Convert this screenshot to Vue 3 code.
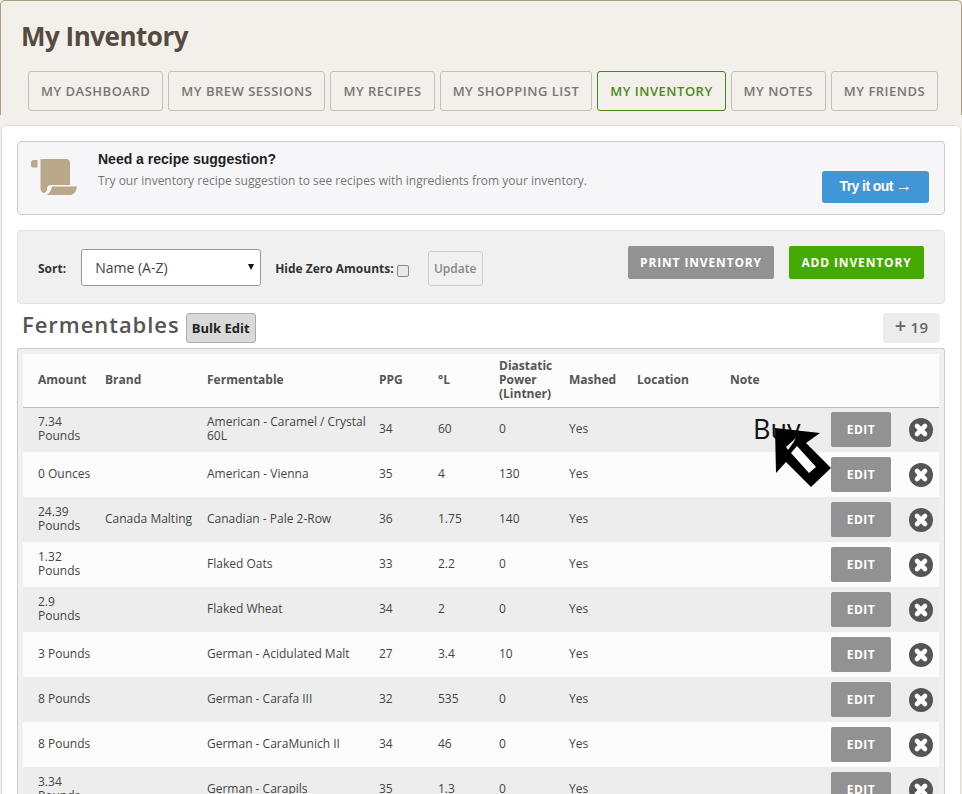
<script setup>
const tabs = ['MY DASHBOARD', 'MY BREW SESSIONS', 'MY RECIPES', 'MY SHOPPING LIST', 'MY INVENTORY', 'MY NOTES', 'MY FRIENDS']
const rows = [
  ['7.34\nPounds', '', 'American - Caramel / Crystal\n60L', '34', '60', '0'],
  ['0 Ounces', '', 'American - Vienna', '35', '4', '130'],
  ['24.39\nPounds', 'Canada Malting', 'Canadian - Pale 2-Row', '36', '1.75', '140'],
  ['1.32\nPounds', '', 'Flaked Oats', '33', '2.2', '0'],
  ['2.9\nPounds', '', 'Flaked Wheat', '34', '2', '0'],
  ['3 Pounds', '', 'German - Acidulated Malt', '27', '3.4', '10'],
  ['8 Pounds', '', 'German - Carafa III', '32', '535', '0'],
  ['8 Pounds', '', 'German - CaraMunich II', '34', '46', '0'],
  ['3.34\nPounds', '', 'German - Carapils', '35', '1.3', '0']
]
</script>

<template>
  <div class="page">
    <header class="head">
      <h1>My Inventory</h1>
      <nav class="tabs">
        <a v-for="t in tabs" :key="t" class="tab" :class="{ active: t === 'MY INVENTORY' }">{{ t }}</a>
      </nav>
    </header>
    <main class="panel">
      <section class="promo">
        <svg class="scroll" width="47" height="37" viewBox="0 0 47 37">
          <path fill="#b9a88a" d="M0 3.5 Q0 1 3 1 L6.5 1 L6.5 8.5 L2 8.5 Q0 8.5 0 6.5 Z" />
          <path fill="#b9a88a" d="M9.5 0 L35 0 Q39 0 39 4 L39 26 L20 26 Q16 26 16 30 L16 31 Q15 34 13 34 Q9.5 33 9.5 29 Z" />
          <path fill="#b9a88a" d="M21 27.5 L46 27.5 Q45 35 40 36 L16 36 Q20 33 21 27.5 Z" />
        </svg>
        <div class="promo-text">
          <strong>Need a recipe suggestion?</strong>
          <p>Try our inventory recipe suggestion to see recipes with ingredients from your inventory.</p>
        </div>
        <a class="try">Try it out <span class="arr">→</span></a>
      </section>

      <section class="filters">
        <label class="lbl sort">Sort:</label>
        <div class="select">Name (A-Z)<span class="caret"></span></div>
        <label class="lbl zero">Hide Zero Amounts:</label>
        <span class="check"></span>
        <span class="update">Update</span>
        <a class="btn grey">PRINT INVENTORY</a>
        <a class="btn green">ADD INVENTORY</a>
      </section>

      <div class="title-row">
        <h2>Fermentables</h2>
        <span class="bulk">Bulk Edit</span>
        <span class="count"><span class="plus">+</span> 19</span>
      </div>

      <div class="frame">
        <table>
          <colgroup>
            <col style="width:67px" /><col style="width:102px" /><col style="width:172px" /><col style="width:59px" />
            <col style="width:61px" /><col style="width:70px" /><col style="width:68px" /><col style="width:93px" />
            <col style="width:116px" /><col style="width:70px" /><col />
          </colgroup>
          <thead>
            <tr>
              <th>Amount</th><th>Brand</th><th>Fermentable</th><th>PPG</th><th>°L</th>
              <th>Diastatic Power (Lintner)</th><th>Mashed</th><th>Location</th><th>Note</th><th></th><th></th>
            </tr>
          </thead>
          <tbody>
            <tr v-for="(r, i) in rows" :key="i">
              <td v-for="(c, j) in r" :key="j">{{ c }}</td>
              <td>Yes</td><td></td><td></td>
              <td class="edit-cell"><a class="edit">EDIT</a></td>
              <td class="del-cell">
                <svg class="del" width="24" height="24" viewBox="0 0 24 24">
                  <circle cx="12" cy="12" r="12" fill="#555" />
                  <path d="M8 8 L16 16 M16 8 L8 16" stroke="#fff" stroke-width="4.6" stroke-linecap="round" />
                </svg>
              </td>
            </tr>
          </tbody>
        </table>
      </div>
    </main>

    <span class="buy">Buy</span>
    <svg class="arrow" width="60" height="62" viewBox="0 0 60 62">
      <polygon points="2,2 47,7 33,17 58,42 38,61 13,36 3,47" fill="#000" />
      <polygon points="18,27 24,20 43,41 36,47" fill="#fff" />
      <polygon points="13,21 23,12 20,17 15,24" fill="#ededed" />
    </svg>
  </div>
</template>

<style>
html, body { margin: 0; background: #fff; }
</style>

<style scoped>
.page {
  position: relative;
  width: 962px;
  height: 794px;
  overflow: hidden;
  background: #f3f0eb;
  font-family: "Open Sans", "Liberation Sans", sans-serif;
  color: #333;
}
.head {
  height: 115px;
  box-sizing: border-box;
  border: 1px solid #ad9c80;
  border-bottom: 0;
  border-radius: 5px 5px 0 0;
  padding: 0 0 0 20px;
  background: #f3f0eb;
}
h1 {
  margin: 0;
  padding-top: 18px;
  font-size: 26px;
  line-height: 34px;
  font-weight: 700;
  letter-spacing: -0.5px;
  color: #544b41;
}
.tabs {
  display: flex;
  gap: 5px;
  margin: 18px 0 0 7px;
}
.tab {
  box-sizing: border-box;
  height: 40px;
  padding: 0 12px;
  display: flex;
  align-items: center;
  border: 1px solid #c4c0ba;
  border-radius: 3px;
  font-size: 13px;
  font-weight: 600;
  letter-spacing: 0.5px;
  color: #777;
}
.tab.active {
  border-color: #3f8a12;
  color: #4a8a22;
}
.panel {
  box-sizing: border-box;
  height: 680px;
  margin: 10px 1px 0 1px;
  padding: 15px 15px 0 15px;
  background: #fff;
  border: 1px solid #e0dcd6;
  border-radius: 5px 5px 0 0;
}
.promo {
  box-sizing: border-box;
  height: 74px;
  display: flex;
  align-items: center;
  background: #f6f6f9;
  border: 1px solid #ccc;
  border-radius: 4px;
  padding: 0 15px 0 13px;
}
.scroll { flex: none; margin: 0 20px 2px 0; }
.promo-text { flex: 1; align-self: flex-start; padding-top: 8px; }
.promo-text strong {
  display: block;
  font-family: "Liberation Sans", Arial, sans-serif;
  font-size: 14px;
  line-height: 18px;
  color: #222;
}
.promo-text p {
  margin: 4px 0 0;
  font-size: 12px;
  line-height: 17px;
  color: #777;
}
.try {
  box-sizing: border-box;
  width: 107px;
  height: 32px;
  margin-top: 18px;
  padding-bottom: 2px;
  display: flex;
  align-items: center;
  justify-content: center;
  background: #4196d8;
  border-radius: 3px;
  font-family: "Liberation Sans", Arial, sans-serif;
  font-size: 14px;
  font-weight: 700;
  letter-spacing: -0.6px;
  white-space: pre;
  color: #fff;
}
.arr { font-size: 16px; font-weight: 400; line-height: 16px; }
.filters {
  box-sizing: border-box;
  height: 74px;
  margin-top: 15px;
  position: relative;
  display: flex;
  align-items: flex-start;
  background: #f0f0f0;
  border: 1px solid #e2e2e2;
  border-radius: 4px;
  padding: 0 20px 0 20px;
}
.lbl {
  font-size: 12px;
  font-weight: 700;
  color: #333;
  line-height: 16px;
  margin-top: 30px;
}
.select {
  box-sizing: border-box;
  position: relative;
  width: 180px;
  height: 37px;
  margin: 18px 14px 0 15px;
  padding-left: 13px;
  line-height: 35px;
  font-size: 14px;
  background: #fff;
  border: 1px solid #999;
  border-radius: 3px;
  color: #444;
}
.caret {
  position: absolute;
  right: 6px;
  top: 14px;
  border-left: 3px solid transparent;
  border-right: 3px solid transparent;
  border-top: 6px solid #111;
}
.check {
  box-sizing: border-box;
  width: 12px;
  height: 12px;
  margin: 34px 0 0 3px;
  background: #e8e8e8;
  border: 1px solid #888;
  border-radius: 2px;
}
.update {
  box-sizing: border-box;
  width: 55px;
  height: 35px;
  margin: 20px 0 0 19px;
  text-align: center;
  line-height: 33px;
  font-size: 12px;
  font-weight: 600;
  color: #888;
  border: 1px solid #ccc;
  border-radius: 3px;
}
.btn {
  box-sizing: border-box;
  height: 33px;
  margin-top: 15px;
  display: flex;
  align-items: center;
  justify-content: center;
  font-size: 12px;
  font-weight: 700;
  letter-spacing: 0.85px;
  color: #fff;
  border-radius: 2px;
}
.btn.grey { width: 146px; margin-left: auto; background: #929292; }
.btn.green { width: 135px; margin-left: 15px; background: #44aa00; }
.title-row {
  height: 44px;
  display: flex;
  align-items: center;
  padding: 0 5px 0 5px;
}
h2 {
  margin: 0 0 4px;
  font-size: 22px;
  font-weight: 600;
  letter-spacing: 0.95px;
  color: #555;
  line-height: 30px;
}
.bulk {
  box-sizing: border-box;
  width: 70px;
  height: 30px;
  margin: 3px 0 0 6px;
  text-align: center;
  line-height: 28px;
  font-size: 13px;
  font-weight: 700;
  color: #222;
  background: #d9d9d9;
  border: 1px solid #aaa;
  border-radius: 3px;
}
.count {
  box-sizing: border-box;
  width: 57px;
  height: 30px;
  margin: 3px 0 0 auto;
  text-align: center;
  line-height: 29px;
  font-size: 15px;
  font-weight: 600;
  letter-spacing: 0.3px;
  color: #666;
  background: #ececec;
  border-radius: 4px;
}
.plus { font-size: 20px; line-height: 20px; }
.frame {
  box-sizing: border-box;
  background: #f0f0f0;
  border: 1px solid #ccc;
  border-bottom: 0;
  border-radius: 3px 3px 0 0;
  padding: 5px 5px 0;
}
table {
  width: 916px;
  table-layout: fixed;
  border-collapse: collapse;
  font-size: 12px;
}
thead tr { height: 53px; background: #fcfcfc; border-bottom: 1px solid #bbb; }
th {
  padding: 0 0 0 15px;
  text-align: left;
  font-weight: 700;
  line-height: 14px;
  color: #555;
}
tbody tr { height: 45px; background: #fcfcfc; }
tbody tr:nth-child(odd) { background: #ededed; }
td {
  padding: 0 0 2px 15px;
  line-height: 14px;
  color: #444;
  height: 45px;
  box-sizing: border-box;
  white-space: pre;
}
.edit-cell { padding: 0; }
.edit {
  box-sizing: border-box;
  width: 60px;
  height: 35px;
  display: flex;
  align-items: center;
  justify-content: center;
  font-size: 12px;
  font-weight: 700;
  letter-spacing: 0.5px;
  color: #fff;
  background: #929292;
  border-radius: 2px;
}
.del-cell { padding: 0; }
.del { display: block; margin-left: 8px; }
.buy {
  position: absolute;
  left: 753px;
  top: 410px;
  font-size: 27px;
  line-height: 37px;
  color: #111;
}
.arrow {
  position: absolute;
  left: 773px;
  top: 426px;
}
</style>
